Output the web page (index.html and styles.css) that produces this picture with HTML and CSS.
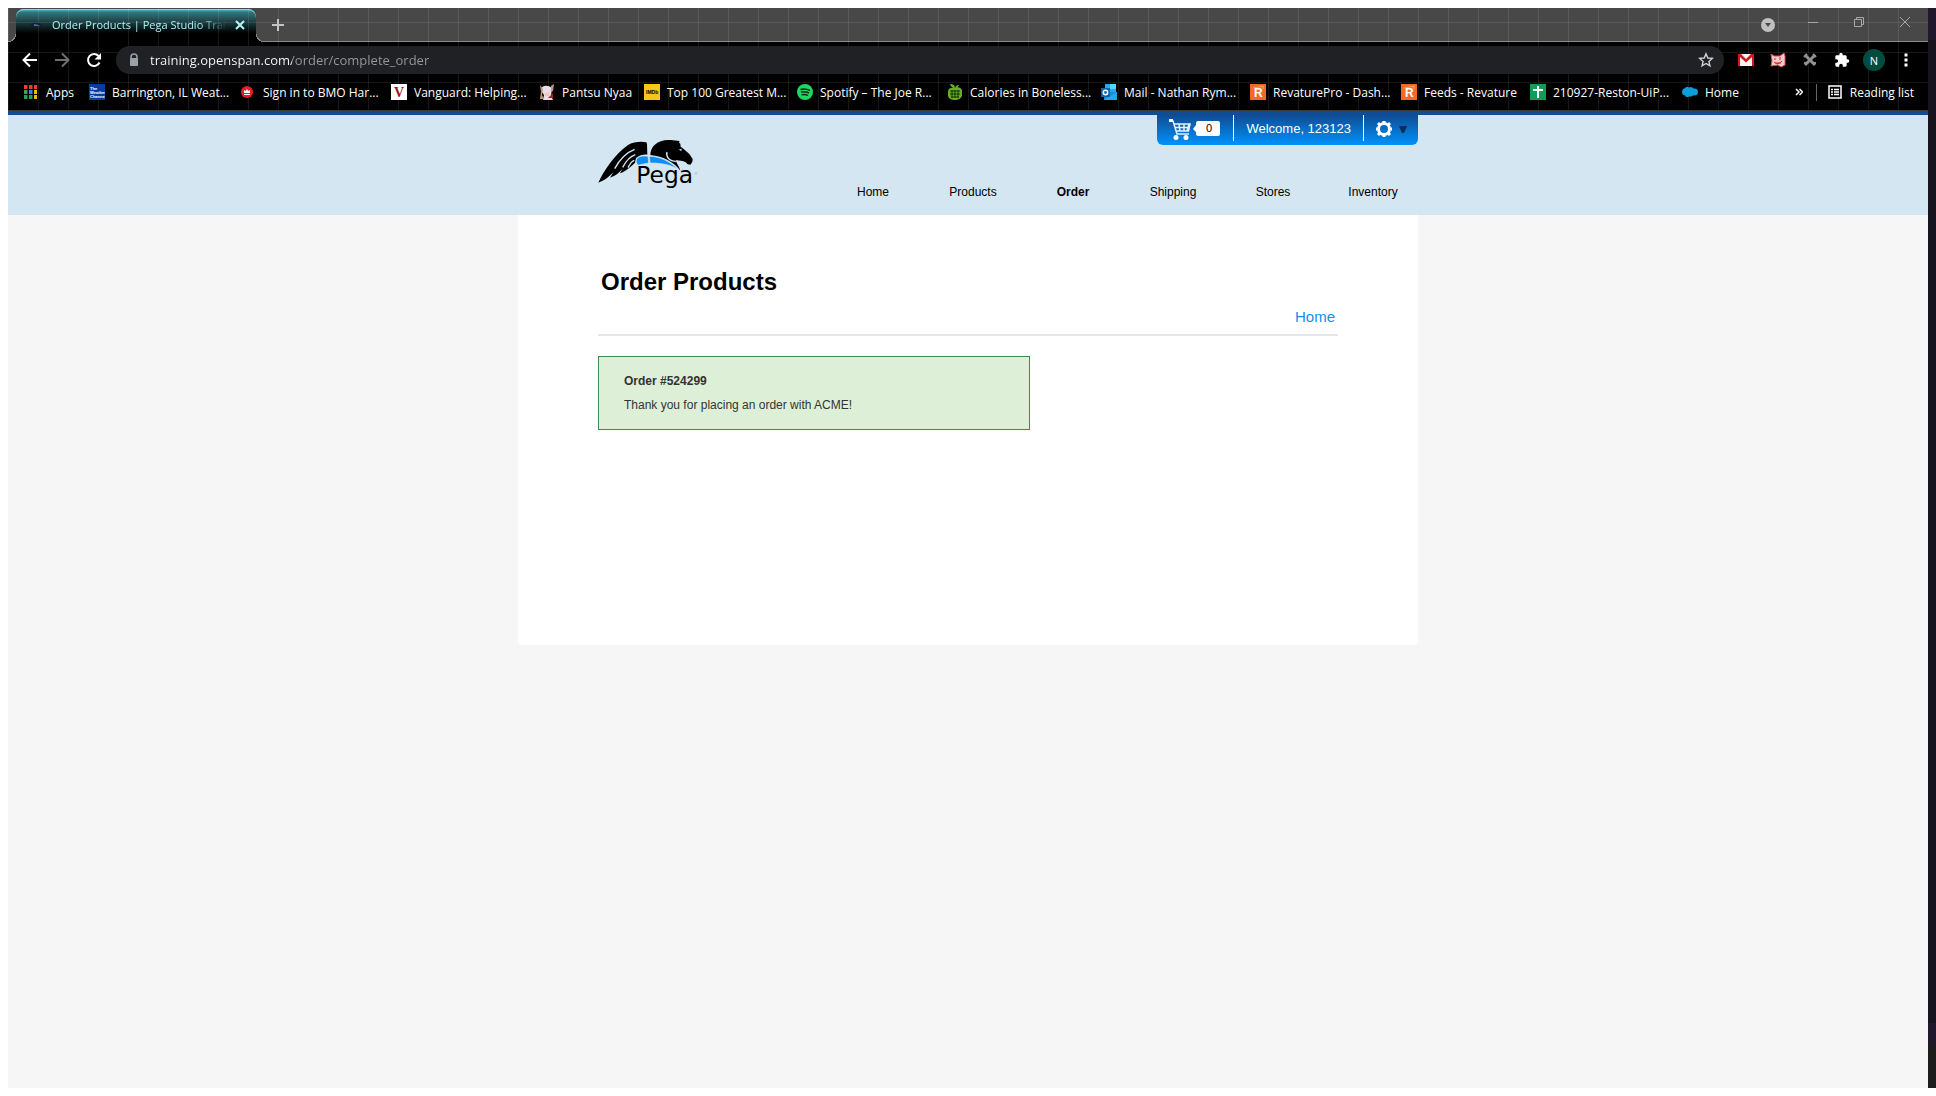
FILE: index.html
```html
<!DOCTYPE html>
<html lang="en">
<head>
<meta charset="utf-8">
<title>Order Products | Pega Studio Training</title>
<link rel="stylesheet" href="styles.css">
</head>
<body>
<div class="desktop">
<div class="window">
  <div class="chrome">
    <div class="tabstrip">
      <div class="tab">
        <svg class="tab-icon" width="16" height="16" viewBox="0 0 16 16"><path d="M1 9Q4 5 8 6Q12 5 15 9L8 8Z" fill="#17232b"/><path d="M6 7Q9 7 12 9L6 9Z" fill="#1183c4"/></svg>
        <span class="tab-title">Order Products | Pega Studio Trai</span>
        <button class="plain tab-close" aria-label="Close tab"><svg width="10" height="10" viewBox="0 0 10 10"><path d="M1 1L9 9M9 1L1 9" stroke="#b5f5f8" stroke-width="2"/></svg></button>
      </div>
      <button class="plain new-tab" aria-label="New tab"><svg width="12" height="12" viewBox="0 0 12 12"><path d="M6 0V12M0 6H12" stroke="#c4c4c4" stroke-width="2"/></svg></button>
      <div class="window-buttons">
        <button class="plain" aria-label="Search tabs"><svg width="16" height="20" viewBox="0 0 16 20"><circle cx="9" cy="13" r="7" fill="#c0c0c0"/><path d="M6 11H12L9 15Z" fill="#484848"/></svg></button>
        <button class="plain" aria-label="Minimize"><svg width="10" height="10" viewBox="0 0 10 10"><path d="M0 5.5H10" stroke="#a8a8a8"/></svg></button>
        <button class="plain" aria-label="Restore"><svg width="10" height="10" viewBox="0 0 10 10"><path d="M.5 2.500H7.500V9.500H.5ZM2.500 2V.5H9.500V7.500H8" fill="none" stroke="#a8a8a8"/></svg></button>
        <button class="plain" aria-label="Close"><svg width="10" height="10" viewBox="0 0 10 10"><path d="M0 0L10 10M10 0L0 10" stroke="#a8a8a8"/></svg></button>
      </div>
    </div>
    <div class="toolbar">
      <div class="history">
        <button class="plain" aria-label="Back"><svg width="16" height="16" viewBox="0 0 16 16"><path d="M15 8H2M8 1.500L1.500 8L8 14.500" fill="none" stroke="#fff" stroke-width="2"/></svg></button>
        <button class="plain" aria-label="Forward"><svg width="16" height="16" viewBox="0 0 16 16"><path d="M1 8H14M8 1.500L14.500 8L8 14.500" fill="none" stroke="#707070" stroke-width="2"/></svg></button>
        <button class="plain" aria-label="Reload"><svg width="16" height="16" viewBox="0 0 16 16"><path d="M13.500 10.500A6 6 0 1 1 12.500 4" fill="none" stroke="#fff" stroke-width="2"/><path d="M15 1V7.500H8.500Z" fill="#fff"/></svg></button>
      </div>
      <div class="address">
        <svg width="12" height="14" viewBox="0 0 12 14"><path d="M3 6V4A3 3 0 0 1 9 4V6" fill="none" stroke="#9aa0a6" stroke-width="1.500"/><rect x="2" y="5" width="8" height="8" rx="1" fill="#9aa0a6"/></svg>
        <input class="url" type="text" aria-label="Address" value="training.openspan.com/order/complete_order">
        <button class="plain" aria-label="Bookmark this page"><svg width="16" height="16" viewBox="0 0 16 16"><path d="M8 1.800L9.800 6L14.300 6.400L10.900 9.400L11.900 13.800L8 11.500L4.100 13.800L5.100 9.400L1.700 6.400L6.200 6Z" fill="none" stroke="#d0d2d5" stroke-width="1.400"/></svg></button>
      </div>
      <div class="extensions">
        <button class="plain" aria-label="Gmail"><svg width="16" height="16" viewBox="0 0 16 16"><rect y="2" width="16" height="12" fill="#f4f4f4"/><path d="M0 2H3L8 7L13 2H16V14H14V5L8 10.500L2 5V14H0Z" fill="#d8141c"/></svg></button>
        <button class="plain" aria-label="Cat extension"><svg width="16" height="16" viewBox="0 0 16 16"><path d="M1 2L4 4H10L14 1L15 4V13L11 15L8 13L1 14L2 9Z" fill="#f5c9c9" stroke="#e05052"/><path d="M5 6V8M10 5V8M4 10Q8 14 12 9M5 11H11" fill="none" stroke="#cf2c30"/></svg></button>
        <button class="plain" aria-label="Tools extension"><svg width="16" height="16" viewBox="0 0 16 16"><path d="M3 3L13 13M13 3L3 13" stroke="#929292" stroke-width="3"/><path d="M2 5L5 2M14 5L11 2M2 11H5M11 11H14" stroke="#929292" stroke-width="2"/></svg></button>
        <button class="plain" aria-label="Extensions"><svg width="16" height="16" viewBox="0 0 24 24"><path d="M20.500 11H19V7c0-1.100-.9-2-2-2h-4V3.500a2.500 2.500 0 0 0-5 0V5H4c-1.100 0-2 .9-2 2v3.800h1.500a2.700 2.700 0 0 1 0 5.400H2V20c0 1.100.9 2 2 2h3.800v-1.500a2.700 2.700 0 0 1 5.400 0V22H17c1.100 0 2-.9 2-2v-4h1.500a2.500 2.500 0 0 0 0-5z" fill="#fff"/></svg></button>
        <button class="plain avatar" aria-label="Profile">N</button>
        <button class="plain" aria-label="Menu"><svg width="16" height="16" viewBox="0 0 16 16"><path d="M6.500 1.500h3v3h-3zM6.500 6.500h3v3h-3zM6.500 11.500h3v3h-3z" fill="#fff"/></svg></button>
      </div>
    </div>
    <nav class="bookmarks" aria-label="Bookmarks">
      <a href="#"><svg viewBox="0 0 16 16"><path d="M1 1h4v4H1zM6 1h4v4H6zM11 1h3v4h-3z" fill="#f23b34"/><path d="M1 6h4v4H1z" fill="#34a853"/><path d="M6 6h4v4H6z" fill="#2f86f6"/><path d="M11 6h3v4h-3z" fill="#fbbc05"/><path d="M1 11h4v4H1zM6 11h4v4H6z" fill="#2e9e53"/><path d="M11 11h3v4h-3z" fill="#f7b516"/><path d="M5 0v16M10 0v16" stroke="#000"/></svg>Apps</a>
      <a href="#"><svg viewBox="0 0 16 16"><path d="M0 0h16v16H0z" fill="#0a3ba0"/><text x="1" y="6" class="mini">The</text><text x="1" y="10" class="mini">Weather</text><text x="1" y="14" class="mini">Channel</text></svg>Barrington, IL Weat...</a>
      <a href="#"><svg viewBox="0 0 16 16"><circle cx="7" cy="8" r="6" fill="#ed1c24"/><path d="M4 9V6L5.500 7L7 5L8.500 7L10 6V9Z" fill="#fff"/><path d="M4 10.500H10" stroke="#fff"/></svg>Sign in to BMO Har...</a>
      <a href="#"><svg viewBox="0 0 16 16"><path d="M0 0h16v16H0z" fill="#fff"/><text x="3" y="13" class="letter serif" fill="#96151d">V</text></svg>Vanguard: Helping...</a>
      <a href="#"><svg viewBox="0 0 16 16"><path d="M3 3Q8 0 13 4L12 12L14 16H4L5 11L3 8Z" fill="#e7dce8"/><path d="M1 1L4 5L3 11L5 15H1L2 8ZM12 2L15 0L14 7L12 8Z" fill="#b99b83"/><path d="M9 14L14 9V14Z" fill="#ab1d22"/><path d="M6 9h4v3H6z" fill="#f7c7aa"/></svg>Pantsu Nyaa</a>
      <a href="#"><svg viewBox="0 0 16 16"><path d="M0 0h16v16H0z" fill="#f5c518"/><text x="2" y="10" class="imdb">IMDb</text></svg>Top 100 Greatest M...</a>
      <a href="#"><svg viewBox="0 0 16 16"><circle cx="8" cy="8" r="8" fill="#1ed760"/><path d="M3.500 5.500Q8 4 13 6.500M4 8.200Q8 7 12 9M4.500 10.800Q8 9.800 11 11.500" fill="none" stroke="#072c13" stroke-width="1.400"/></svg>Spotify – The Joe R...</a>
      <a href="#"><svg viewBox="0 0 16 16"><path d="M8 4Q13 2 15 6V12Q13 16 8 16Q2 16 1 12V7Q2 3 8 4ZM3 0Q8 0 8 4Q4 4 3 0M8 4Q9 1 12 1Q11 4 8 4" fill="#68b023"/><path d="M3 7H13M3 10H13M4 13H12M5 6V14M8 6V14M11 6V14" stroke="#16300a"/></svg>Calories in Boneless...</a>
      <a href="#"><svg viewBox="0 0 16 16"><path d="M4 0h11v9H4z" fill="#28a8ea"/><path d="M9 0h6v5H9z" fill="#50d9ff"/><path d="M3 8L16 8V15Q16 16 15 16H3Z" fill="#1490df"/><path d="M3 16L16 8V16Z" fill="#28a8ea"/><path d="M0 4h9v9H0z" fill="#0f5fb0"/><circle cx="4.500" cy="8.500" r="2.200" fill="none" stroke="#fff" stroke-width="1.500"/></svg>Mail - Nathan Rym...</a>
      <a href="#"><svg viewBox="0 0 16 16"><path d="M0 0h16v16H0z" fill="#f26a26"/><path d="M3 4L9 3L13 2V5" fill="none" stroke="#f9a577"/><text x="4" y="13" class="letter" fill="#fff">R</text></svg>RevaturePro - Dash...</a>
      <a href="#"><svg viewBox="0 0 16 16"><path d="M0 0h16v16H0z" fill="#f26a26"/><path d="M3 4L9 3L13 2V5" fill="none" stroke="#f9a577"/><text x="4" y="13" class="letter" fill="#fff">R</text></svg>Feeds - Revature</a>
      <a href="#"><svg viewBox="0 0 16 16"><path d="M0 0h16v16H0z" fill="#119c58"/><path d="M8 2V14M3 6H13" stroke="#fff" stroke-width="2"/></svg>210927-Reston-UiP...</a>
      <a href="#"><svg viewBox="0 0 16 16"><path d="M3 4Q5 2 7 3.500Q10 2 11.500 4.500Q16 4 16 8Q16 12 11 11.500Q9 13 7 12.500Q4 14 3 11.500Q0 11 0 8Q0 5 3 4Z" fill="#0d9ddb"/></svg>Home</a>
      <div class="bookmarks-end">
        <button class="plain" aria-label="More bookmarks"><svg width="8" height="8" viewBox="0 0 8 8"><path d="M1 1L4 4L1 7M4.500 1L7.500 4L4.500 7" fill="none" stroke="#fff" stroke-width="1.500"/></svg></button>
        <button class="plain reading"><svg width="14" height="14" viewBox="0 0 14 14"><path d="M1 1H13V13H1Z" fill="none" stroke="#fff" stroke-width="1.500"/><path d="M3 4.500H5M6 4.500H11M3 7H5M6 7H11M3 9.500H5M6 9.500H11" stroke="#fff" stroke-width="1.500"/></svg>Reading list</button>
      </div>
    </nav>
  </div>

  <div class="page">
    <header class="site-header">
      <div class="container header-inner">
        <a class="logo" href="#" aria-label="Pega">
          <svg width="100" height="49" viewBox="54 87 300 147">
            <path d="M55 218C70 185 105 132 143 106C160 95 185 94 199 97L201 102L202 134C190 133 178 136 168 144L165 158C160 163 150 172 142 178C138 182 130 187 120 190L127 177C118 188 108 197 90 203L100 187C88 198 77 211 55 218Z"/>
            <path d="M164 118C135 129 118 150 104 176M166 134C148 140 137 155 128 172M163 151C155 153 150 161 144 173" fill="none" stroke="#d4e6f1" stroke-width="4"/>
            <path d="M211 135C211 108 235 87 272 90L299 93L297 98L301 101L302 110L312 118L328 132L338 147L337 156L331 164L323 163L317 157C308 151 298 153 289 150C285 155 299 170 301 182C284 158 250 138 211 135Z"/>
            <path d="M261 126C257 141 267 153 289 154" fill="none" stroke="#d4e6f1" stroke-width="4"/><path d="M296 119L305 116L304 123Z" fill="#d4e6f1"/>
            <path d="M172 144C180 137 193 137 204 139L206 159C195 161 185 163 174 166C167 158 168 150 172 144ZM208 139C240 139 270 155 292 176C270 163 240 159 210 159Z" fill="#0c90f8" stroke="#d4e6f1" stroke-width="2"/>
            <text x="169" y="219" class="wordmark">Pega</text>
            <circle cx="348" cy="190" r="3" fill="none" stroke="#8794a0"/>
          </svg>
        </a>
        <div class="header-right">
          <div class="userbar">
            <a class="cart" href="#" aria-label="Shopping cart, 0 items">
              <svg width="52" height="24" viewBox="0 0 52 24"><path d="M0 3H4L8 16H20M5.500 6H21L19.500 13H7.500M10 6L11 13M15 6V13M20 6L18 13M6 9.500H20" fill="none" stroke="#e4f1fc" stroke-width="1.500"/><path d="M0 1h4v3H0z" fill="#fff"/><circle cx="7" cy="19.500" r="2.500" fill="#fff"/><circle cx="17" cy="19.500" r="2.500" fill="#fff"/><path d="M24 11L27 7V5Q27 3 29 3H49Q51 3 51 5V16Q51 18 49 18H29Q27 18 27 16V14Z" fill="#fff"/><text x="37" y="14" class="count">0</text></svg>
            </a>
            <span class="welcome">Welcome, 123123</span>
            <button class="plain settings" aria-label="Settings"><svg width="18" height="18" viewBox="0 0 18 18"><circle cx="9" cy="9" r="5.500" fill="none" stroke="#fff" stroke-width="3"/><path d="M9 1V3M9 15V17M1 9H3M15 9H17M3 3L5 5M13 13L15 15M15 3L13 5M5 13L3 15" stroke="#fff" stroke-width="3"/></svg><svg width="8" height="8" viewBox="0 0 8 8"><path d="M0 1H8L5 8H3Z" fill="#0b2f5c"/></svg></button>
          </div>
          <nav class="mainnav" aria-label="Main">
            <a href="#">Home</a><a href="#">Products</a><a href="#" class="current">Order</a><a href="#">Shipping</a><a href="#">Stores</a><a href="#">Inventory</a>
          </nav>
        </div>
      </div>
    </header>
    <main class="container content">
      <h1>Order Products</h1>
      <div class="crumbs"><a href="#">Home</a></div>
      <section class="notice">
        <strong>Order #524299</strong>
        <p>Thank you for placing an order with ACME!</p>
      </section>
    </main>
  </div>
</div>
<div class="backdrop"></div>
</div>
</body>
</html>
```
FILE: styles.css
```css
* { box-sizing: border-box; }
body {
  margin: 0;
  background: #fff;
  font-family: "Liberation Sans", Arial, sans-serif;
  font-size: 12px;
}
a { color: inherit; text-decoration: none; }
svg { display: block; flex: none; }
.plain {
  display: flex;
  align-items: center;
  justify-content: center;
  padding: 0;
  border: 0;
  background: none;
  color: inherit;
  font: inherit;
}
.desktop {
  display: flex;
  min-height: 100vh;
  padding: 8px 0 8px 8px;
}
.window {
  flex: 1;
  min-width: 0;
  display: flex;
  flex-direction: column;
}
.backdrop {
  width: 8px;
  background: linear-gradient(#21182b 0 32px, #17141f 32px 94%, #21182b 94% 96%, #1d1d1d 96%);
}

/* Browser frame */
.chrome {
  position: relative;
  background: #000;
  border-bottom: 1px solid #3a3a3a;
  color: #fff;
  font-family: "Open Sans", "Noto Sans", sans-serif;
}
/* theme grid, drawn over the strips and under the controls */
.chrome::before {
  content: "";
  position: absolute;
  inset: 0;
  z-index: 1;
  background-image:
    linear-gradient(90deg, rgba(255,255,255,.09) 1px, transparent 1px),
    linear-gradient(rgba(255,255,255,.09) 1px, transparent 1px);
  background-size: 30px 30px;
  background-position: 0 14px;
  pointer-events: none;
}
.chrome button, .chrome a, .tab-icon, .tab-title, .address { position: relative; z-index: 2; }

.tabstrip {
  display: flex;
  align-items: center;
  height: 34px;
  padding-left: 8px;
  background: #484848;
  box-shadow: inset 0 -1px #8a8a8a;
}
.tab {
  position: relative;
  display: flex;
  align-items: center;
  align-self: stretch;
  gap: 8px;
  width: 240px;
  margin-top: 1px;
  padding: 0 11px 2px 12px;
  border-radius: 8px 8px 0 0;
  background: linear-gradient(#5fd0da 0, #35777e 3px, #000 24px);
  box-shadow: inset 0 1px #6fdde4;
  color: #a9f1f5;
  font-size: 11px;
}
.tab::before, .tab::after {
  content: "";
  position: absolute;
  bottom: 0;
  width: 8px;
  height: 8px;
}
.tab::before { left: -8px; background: radial-gradient(circle at 0 0, #484848 7px, #8a8a8a 7px 8px, #000 8px); }
.tab::after { right: -8px; background: radial-gradient(circle at 100% 0, #484848 7px, #8a8a8a 7px 8px, #000 8px); }
.tab-title {
  flex: 1;
  white-space: nowrap;
  -webkit-mask-image: linear-gradient(90deg, #000 84%, transparent);
  mask-image: linear-gradient(90deg, #000 84%, transparent);
}
.new-tab { width: 28px; height: 28px; margin-left: 8px; }
.window-buttons {
  display: flex;
  margin: 0 0 6px auto;
}
.window-buttons .plain { width: 46px; height: 28px; }

.toolbar {
  display: flex;
  align-items: center;
  height: 36px;
  padding: 0 14px;
}
.history { display: flex; gap: 16px; width: 94px; }
.address {
  flex: 1;
  display: flex;
  align-items: center;
  gap: 10px;
  height: 28px;
  padding: 0 10px 0 12px;
  border-radius: 14px;
  background: #202124;
}
.url {
  flex: 1;
  min-width: 0;
  padding: 0;
  border: 0;
  outline: 0;
  font: 13px/20px "Open Sans", "Noto Sans", sans-serif;
  color: transparent;
  background: linear-gradient(90deg, #fff 142px, #9a9a9a 142px);
  -webkit-background-clip: text;
  background-clip: text;
}
.extensions {
  display: flex;
  align-items: center;
  gap: 16px;
  padding-left: 14px;
}
.extensions .avatar {
  width: 22px;
  height: 22px;
  margin: 0 -3px;
  border-radius: 50%;
  background: #004d40;
  font-size: 11px;
}

.bookmarks {
  display: grid;
  grid-template-columns: 66px 151px 151px 148px 105px 153px 150px 154px 149px 151px 129px 152px 60px 1fr;
  align-items: center;
  height: 32px;
  padding: 0 14px 4px 15px;
}
.bookmarks a { display: flex; align-items: center; gap: 7px; white-space: nowrap; }
.bookmarks a svg { width: 16px; height: 16px; }
.mini { font: bold 4px "Liberation Sans", sans-serif; fill: #fff; }
.imdb { font: bold 5px "Liberation Sans", sans-serif; fill: #000; }
.letter { font: bold 12px "Liberation Sans", sans-serif; }
.serif { font-family: "Liberation Serif", serif; font-size: 14px; }
.bookmarks-end { display: flex; justify-content: flex-end; gap: 13px; }
.reading {
  gap: 8px;
  padding-left: 11px;
  border-left: 1px solid #666;
  white-space: nowrap;
}

/* Web page */
.page { flex: 1; background: #f6f6f6; }
.container { max-width: 900px; margin: 0 auto; }
.site-header {
  border-top: 4px solid #0f4c94;
  background: #d4e6f1;
}
.header-inner {
  display: flex;
  justify-content: space-between;
  height: 100px;
  padding-left: 80px;
}
.logo { margin-top: 24px; }
.wordmark { font: 70px "DejaVu Sans", sans-serif; }
.header-right { display: flex; flex-direction: column; align-items: flex-end; }
.userbar {
  display: flex;
  height: 30px;
  border-radius: 0 0 6px 6px;
  background: linear-gradient(#0f4c94, #0092fb);
  color: #fff;
}
.cart { padding: 3px 12px 0; }
.count { font: 11px "Liberation Sans", sans-serif; fill: #000; }
.welcome {
  height: 26px;
  padding: 0 12px;
  border: solid #fff;
  border-width: 0 1px;
  font-size: 13px;
  line-height: 27px;
}
.settings { gap: 6px; padding: 0 11px 2px; }
.mainnav {
  display: flex;
  margin: 40px -5px 0 0;
}
.mainnav a { width: 100px; line-height: 14px; text-align: center; color: #000; }
.mainnav .current { font-weight: bold; }

.content {
  min-height: 430px;
  padding: 51px 80px;
  border-radius: 0 0 4px 4px;
  background: #fff;
}
h1 { margin: 0; padding-left: 3px; font-size: 24px; line-height: 32px; }
.crumbs {
  padding: 10px 3px 9px;
  border-bottom: 2px solid #e5e5e5;
  color: #1190f0;
  font-size: 15px;
  line-height: 17px;
  text-align: right;
}
.notice {
  max-width: 432px;
  margin-top: 20px;
  padding: 12px 25px;
  border: 1px solid #3c8c4c;
  background: #deefd8;
  color: #333;
  line-height: 24px;
}
.notice p { margin: 0; }
.notice strong { display: block; }
```
